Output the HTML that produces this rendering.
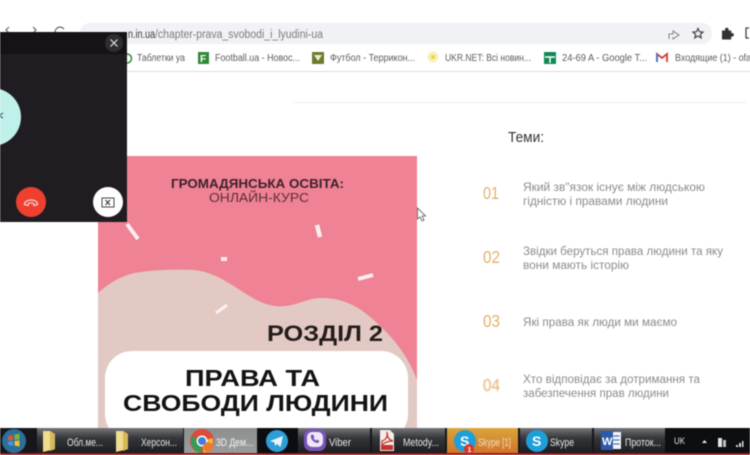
<!DOCTYPE html>
<html><head><meta charset="utf-8"><style>
html,body{margin:0;padding:0;width:750px;height:455px;overflow:hidden;background:#fff}
svg{display:block;filter:blur(.45px)}
text{font-family:"Liberation Sans","DejaVu Sans",sans-serif}
</style></head><body>
<svg width="750" height="455" viewBox="0 0 750 455" xmlns="http://www.w3.org/2000/svg">
<defs>
<linearGradient id="tb" x1="0" y1="0" x2="0" y2="1"><stop offset="0" stop-color="#74767a"/><stop offset=".4" stop-color="#34363a"/><stop offset="1" stop-color="#1c1d20"/></linearGradient>
<linearGradient id="tl" x1="0" y1="0" x2="0" y2="1"><stop offset="0" stop-color="#8d8f90"/><stop offset="1" stop-color="#9a9c9c"/></linearGradient>
<linearGradient id="to" x1="0" y1="0" x2="0" y2="1"><stop offset="0" stop-color="#d9a53c"/><stop offset="1" stop-color="#d0762a"/></linearGradient>
</defs>
<rect width="750" height="455" fill="#fff"/>
<!-- address bar -->
<rect x="80" y="23" width="632" height="21" rx="10" fill="#f1f2f5"/>
<text x="128" y="38" font-size="11.500" fill="#3a3a3a" textLength="27" lengthAdjust="spacingAndGlyphs">n.in.ua</text>
<text x="155" y="38" font-size="11.500" fill="#7b7b7b" textLength="168" lengthAdjust="spacingAndGlyphs">/chapter-prava_svobodi_i_lyudini-ua</text>
<path d="M669 39v-5h4v-3l6 4-6 4v-2" fill="none" stroke="#8b8b8b" stroke-width="1.100"/>
<path d="M698 28.500l1.500 3.200 3.500.4-2.600 2.300.8 3.500-3.200-1.900-3.200 1.900.8-3.500-2.600-2.300 3.500-.4z" fill="none" stroke="#444" stroke-width="1.200"/>
<path d="M722 30.500h3v-1a1.800 1.800 0 0 1 3.600 0v1h2.600v2.500h.8a1.800 1.800 0 0 1 0 3.600h-.8v2.900h-9.200z" fill="#333"/>
<path d="M749 28h-3v10h3" fill="none" stroke="#444" stroke-width="1.300"/>
<!-- bookmarks -->
<rect x="0" y="71" width="750" height="1" fill="#dcdcdc"/>
<path d="M127 54a4.500 4.500 0 0 1 0 9" fill="none" stroke="#2f8a35" stroke-width="1.500"/>
<text x="137" y="61" font-size="10" fill="#5c5c5c" textLength="48" lengthAdjust="spacingAndGlyphs">Таблетки уа</text>
<rect x="198" y="52" width="11" height="12" fill="#2f8a35"/>
<text x="200" y="62" font-size="10" font-weight="bold" fill="#fff">F</text>
<text x="215" y="61" font-size="10" fill="#5c5c5c" textLength="85" lengthAdjust="spacingAndGlyphs">Football.ua - Новос...</text>
<rect x="312" y="52" width="12" height="12" fill="#6e7a2c"/>
<path d="M314 55h8l-4 6z" fill="#e8ebd0"/>
<text x="330" y="61" font-size="10" fill="#5c5c5c" textLength="85" lengthAdjust="spacingAndGlyphs">Футбол - Террикон...</text>
<circle cx="433" cy="57" r="5.500" fill="#f7f0b8"/><circle cx="433" cy="57" r="2" fill="#eed24c"/>
<text x="445" y="61" font-size="10" fill="#5c5c5c" textLength="86" lengthAdjust="spacingAndGlyphs">UKR.NET: Всі новин...</text>
<rect x="544" y="52" width="12" height="12" fill="#0f8a55"/>
<path d="M545 57h10M550 57v6" stroke="#fff" stroke-width="1.500"/>
<text x="562" y="61" font-size="10" fill="#5c5c5c" textLength="85" lengthAdjust="spacingAndGlyphs">24-69 A - Google T...</text>
<path d="M657 62v-8l5 4 5-4v8" fill="none" stroke="#d63c30" stroke-width="1.800"/>
<path d="M657 62v-8" stroke="#3a78d8" stroke-width="1.800"/>
<text x="675" y="61" font-size="10" fill="#5c5c5c" textLength="76" lengthAdjust="spacingAndGlyphs">Входящие (1) - ofa</text>
<!-- hairline -->
<rect x="293" y="102" width="453" height="1" fill="#eeeeee"/>
<!-- poster -->
<rect x="98" y="156" width="319" height="272" fill="#ef8294"/>
<path d="M98 293C108 284 120 276 135 273C150 270 175 269 195 270C212 272 226 281 240 290C252 298 262 304 275 306C288 308 300 302 312 299C328 296 345 300 358 308C372 317 385 330 396 343C405 354 412 367 417 380V428H98Z" fill="#e2c9c3"/>
<rect x="105" y="351" width="303" height="90" rx="27" fill="#fff"/>
<g stroke="#fbeef0" stroke-linecap="butt">
<path d="M127 224L138 239" stroke-width="4"/>
<path d="M317 225L320 237" stroke-width="4.500"/>
<path d="M221 259H227" stroke-width="4"/>
<path d="M358 279L373 275" stroke-width="4"/>
<path d="M216 313L227 305" stroke-width="3.500"/>
</g>
<text x="171" y="188" font-size="12.500" font-weight="bold" fill="#3d2228" textLength="173" lengthAdjust="spacingAndGlyphs">ГРОМАДЯНСЬКА ОСВІТА:</text>
<text x="209" y="202" font-size="12.500" fill="#5a2f3a" textLength="100" lengthAdjust="spacingAndGlyphs">ОНЛАЙН-КУРС</text>
<text x="267" y="341" font-size="22" font-weight="bold" fill="#241b1b" textLength="116" lengthAdjust="spacingAndGlyphs">РОЗДІЛ 2</text>
<text x="185" y="386" font-size="23.500" font-weight="bold" fill="#141214" textLength="135" lengthAdjust="spacingAndGlyphs">ПРАВА ТА</text>
<text x="123" y="411" font-size="23.500" font-weight="bold" fill="#141214" textLength="265" lengthAdjust="spacingAndGlyphs">СВОБОДИ ЛЮДИНИ</text>
<!-- cursor -->
<path d="M417.500 208L417.500 219L420 217L422 221L424 220L422 216L425.500 216Z" fill="#fff" stroke="#555" stroke-width=".8"/>
<!-- right column -->
<text x="508" y="142" font-size="15" fill="#333" textLength="36" lengthAdjust="spacingAndGlyphs">Теми:</text>
<g font-size="17.500" fill="#e3b06c">
<text x="483" y="199" textLength="16" lengthAdjust="spacingAndGlyphs">01</text>
<text x="483" y="263" textLength="17" lengthAdjust="spacingAndGlyphs">02</text>
<text x="483" y="327" textLength="17" lengthAdjust="spacingAndGlyphs">03</text>
</g>
<g font-size="11.500" fill="#8c8c8c">
<text x="523" y="191" textLength="182" lengthAdjust="spacingAndGlyphs">Який зв"язок існує між людською</text>
<text x="523" y="205" textLength="145" lengthAdjust="spacingAndGlyphs">гідністю і правами людини</text>
<text x="523" y="255" textLength="200" lengthAdjust="spacingAndGlyphs">Звідки беруться права людини та яку</text>
<text x="523" y="269" textLength="106" lengthAdjust="spacingAndGlyphs">вони мають історію</text>
<text x="523" y="326" textLength="154" lengthAdjust="spacingAndGlyphs">Які права як люди ми маємо</text>
<text x="523" y="383" textLength="177" lengthAdjust="spacingAndGlyphs">Хто відповідає за дотримання та</text>
<text x="523" y="397" textLength="146" lengthAdjust="spacingAndGlyphs">забезпечення прав людини</text>
</g>
<svg x="480" y="370" width="24" height="22"><text x="3" y="21" font-size="17.500" fill="#e3b06c" textLength="17" lengthAdjust="spacingAndGlyphs">04</text></svg>
<!-- nav arrows -->
<path d="M9 27l-3 3 3 3M33 27l3 3-3 3" fill="none" stroke="#666" stroke-width="1.200"/>
<path d="M64 29a5 5 0 1 0 1 4" fill="none" stroke="#666" stroke-width="1.200"/>
<!-- video panel -->
<rect x="0" y="32" width="127" height="190" fill="#201d22"/>
<rect x="0" y="32" width="127" height="22" fill="#151317"/>
<circle cx="114" cy="43" r="9" fill="#2f2d32"/>
<path d="M110.500 39.500l7 7m0-7l-7 7" stroke="#e4e4e4" stroke-width="1.200"/>
<circle cx="-8" cy="117" r="29" fill="#bff0ea"/>
<path d="M3 113l-4 2.500 4 2.500" fill="none" stroke="#3a6f73" stroke-width="1.300"/>
<circle cx="31" cy="202" r="15" fill="#ef3f2f"/>
<path d="M24.500 204.500c0-6 13-6 13 0l-3.500 1-.5-2c-2-1-3-1-5 0l-.5 2z" fill="none" stroke="#f7d5cf" stroke-width="1.300"/>
<circle cx="108" cy="202" r="15" fill="#fff"/>
<rect x="102" y="198" width="12" height="9" fill="none" stroke="#444" stroke-width="1"/>
<path d="M105.500 200l4.500 5m0-5l-4.500 5" stroke="#333" stroke-width="1.100"/>
<!-- taskbar -->
<rect x="0" y="428" width="750" height="27" fill="#15171a"/>
<rect x="0" y="453" width="750" height="2" fill="#a5141c"/>
<g>
<rect x="37" y="428" width="73" height="25" fill="url(#tb)"/>
<rect x="110" y="428" width="73" height="25" fill="url(#tb)"/>
<rect x="184" y="428" width="73" height="25" fill="url(#tl)"/>
<rect x="298" y="428" width="72" height="25" fill="url(#tb)"/>
<rect x="372" y="428" width="73" height="25" fill="url(#tb)"/>
<rect x="447" y="428" width="71" height="25" fill="url(#to)"/>
<rect x="520" y="428" width="72" height="25" fill="url(#tb)"/>
<rect x="594" y="428" width="71" height="25" fill="url(#tb)"/>
<rect x="258" y="428" width="40" height="25" fill="#0c0d10"/>
<rect x="665" y="428" width="85" height="25" fill="#0d0e11"/>
</g>
<!-- start orb -->
<circle cx="14" cy="441" r="12" fill="#2c6f9a"/>
<path d="M8 436l5 -1v5l-5 .5z" fill="#e0553a"/><path d="M14.500 434.500l5 -1v6l-5 .5z" fill="#7cb342"/>
<path d="M8 441.500l5 -.5v5l-5-1z" fill="#3d9be0"/><path d="M14.500 441l5-.5v6l-5-1z" fill="#f2c230"/>
<!-- folders -->
<path d="M43 431h7l5 3v15l-12 3z" fill="#efdc8e"/><path d="M50 431l5 3v15l-5 2z" fill="#d6b85a"/>
<path d="M116 431h7l5 3v15l-12 3z" fill="#efdc8e"/><path d="M123 431l5 3v15l-5 2z" fill="#d6b85a"/>
<g font-size="11" fill="#e6e6e6">
<text x="67" y="446" textLength="36" lengthAdjust="spacingAndGlyphs">Обл.ме...</text>
<text x="141" y="446" textLength="36" lengthAdjust="spacingAndGlyphs">Херсон...</text>
<text x="216" y="446" textLength="37" lengthAdjust="spacingAndGlyphs" fill="#f4f4f4">3D Дем...</text>
<text x="329" y="446" textLength="22" lengthAdjust="spacingAndGlyphs">Viber</text>
<text x="403" y="446" textLength="36" lengthAdjust="spacingAndGlyphs">Metody...</text>
<text x="478" y="446" textLength="33" lengthAdjust="spacingAndGlyphs" fill="#f2dcc0">Skype [1]</text>
<text x="550" y="446" textLength="24" lengthAdjust="spacingAndGlyphs">Skype</text>
<text x="625" y="446" textLength="36" lengthAdjust="spacingAndGlyphs">Проток...</text>
<text x="674" y="444" textLength="11" lengthAdjust="spacingAndGlyphs" font-size="9.500">UK</text>
</g>
<!-- chrome -->
<circle cx="202" cy="441" r="12" fill="#dd4b3a"/>
<path d="M202 441l10.500 -3a12 12 0 0 1-9 15z" fill="#f2be2e"/>
<path d="M202 441l-10 -5a12 12 0 0 0 10 17z" fill="#3a9a50"/>
<circle cx="202" cy="441" r="5.500" fill="#fff"/><circle cx="202" cy="441" r="4" fill="#3f7fe0"/>
<circle cx="208" cy="447" r="5" fill="#ea7a30"/>
<!-- telegram -->
<circle cx="277" cy="441" r="11" fill="#2f9ed8"/>
<path d="M270 441l13-5-2.500 11-3.500-3-2 2-.5-3.500z" fill="#e8f3f8"/>
<!-- viber -->
<rect x="304" y="429" width="22" height="22" rx="7" fill="#7a55b8"/>
<rect x="307" y="432" width="16" height="15" rx="5" fill="#efe8f6"/>
<path d="M311 435c-1 4 3 8 7 8l1.500-2-2.500-1.500-1 1c-1-.5-2-1.500-2.500-2.500l1-1-1.500-2.500z" fill="#7a55b8"/>
<!-- pdf -->
<path d="M380 430h10l4 4v17h-14z" fill="#f2ecea"/>
<path d="M382 441c4-1 6-5 5-9 0 5 2 8 6 9-4 0-8 1-11 4z" fill="none" stroke="#c8322a" stroke-width="1.300"/>
<rect x="381" y="445" width="12" height="5" fill="#c8322a"/>
<!-- skype -->
<circle cx="465" cy="441" r="11" fill="#1e9fd8"/>
<text x="460" y="446" font-size="14" font-weight="bold" fill="#fff">S</text>
<circle cx="469" cy="449" r="5" fill="#d8362a"/>
<text x="467.500" y="452" font-size="7" font-weight="bold" fill="#fff">1</text>
<circle cx="537" cy="441" r="11" fill="#1e9fd8"/>
<text x="532" y="446" font-size="14" font-weight="bold" fill="#fff">S</text>
<!-- word -->
<rect x="612" y="432" width="9" height="17" fill="#f1f3f7"/>
<path d="M613.500 436h6M613.500 440h6M613.500 444h6" stroke="#2b5aa8" stroke-width="1"/>
<rect x="601" y="431" width="12" height="19" fill="#2b5aa8"/>
<text x="602" y="445" font-size="11" font-weight="bold" fill="#fff">W</text>
<!-- tray -->
<path d="M702 443l2.500-3 2.500 3z" fill="#e8e8e8"/>
<rect x="718" y="438" width="4" height="9" fill="#e4e4e4"/><rect x="723" y="440" width="3" height="7" fill="#bcbcbc"/>
<path d="M736 447h2v-2h-2zM739 447h2v-4h-2zM742 447h1.500v-6h-1.500z" fill="#d8d8d8"/>
</svg>
</body></html>
